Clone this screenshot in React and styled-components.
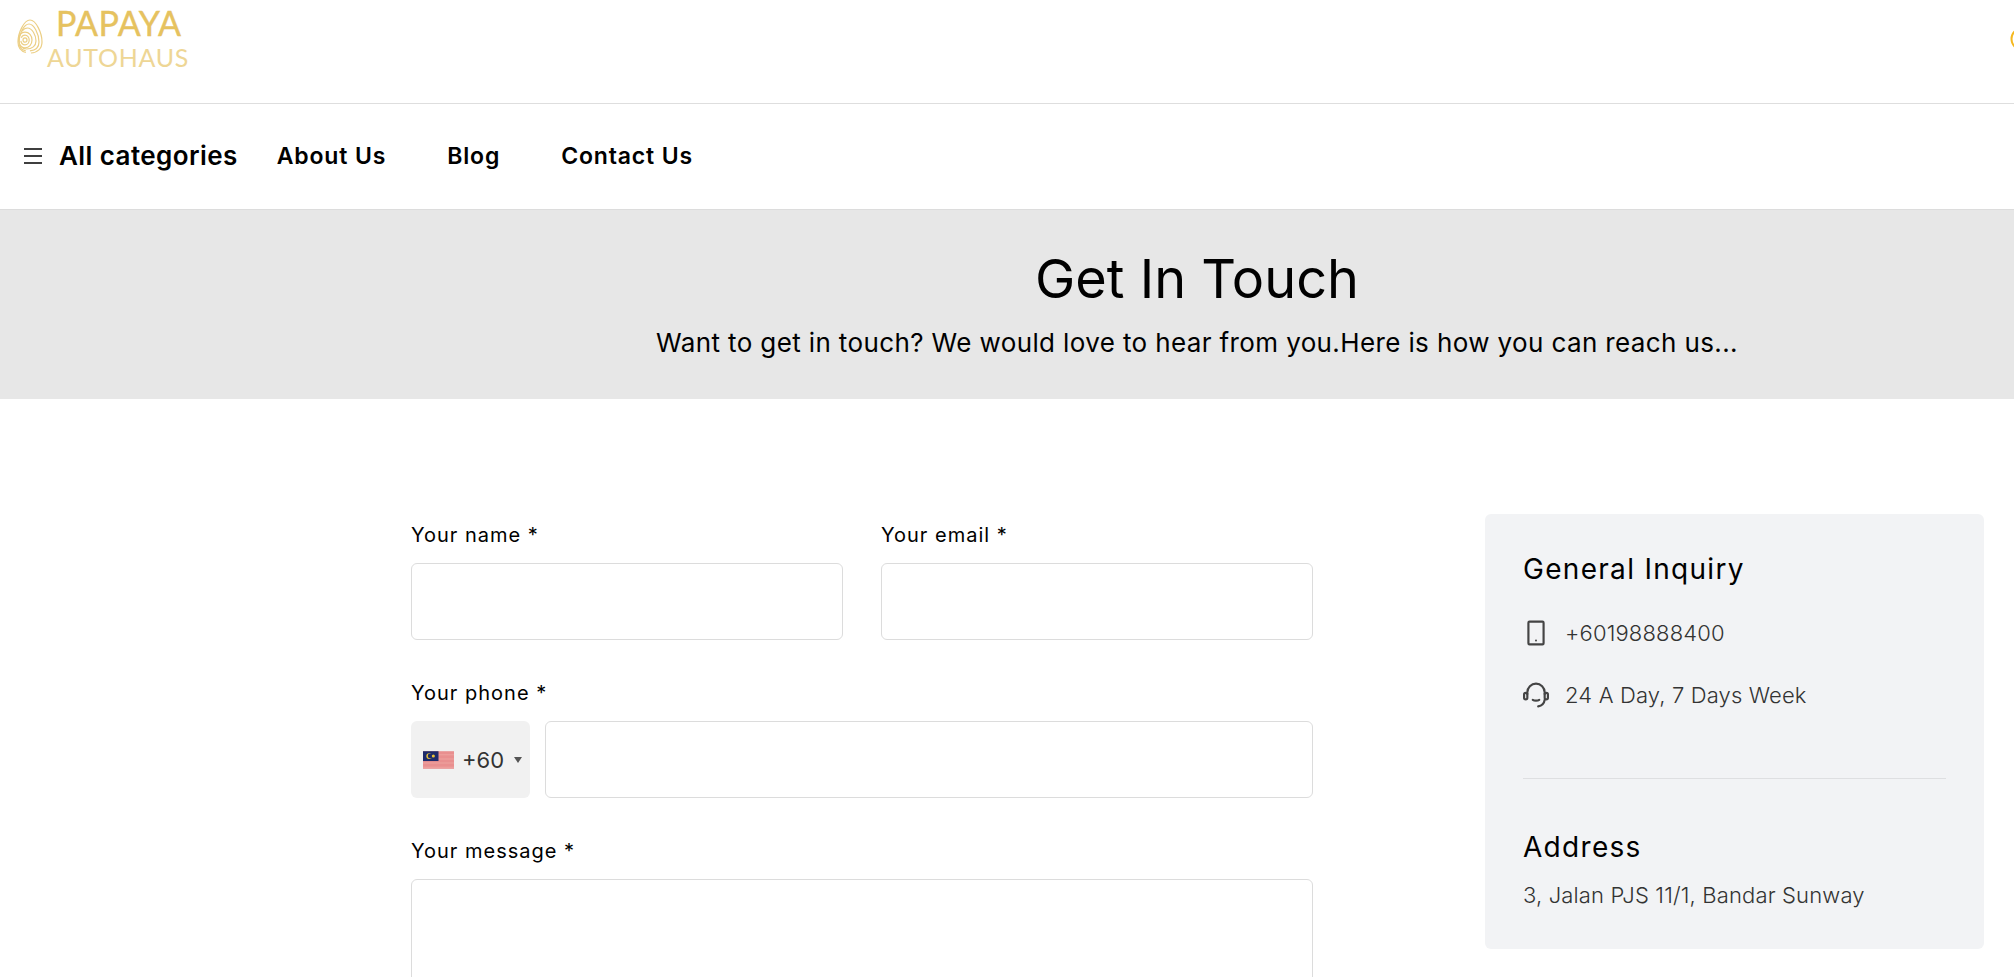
import React from "react";
import styled, { createGlobalStyle } from "styled-components";

const GlobalStyle = createGlobalStyle`
  html, body {
    margin: 0;
    padding: 0;
    background: #fff;
    overflow: hidden;
  }
  #root {
    height: 977px;
    overflow: hidden;
  }
  * {
    box-sizing: border-box;
  }
`;

export default function App() {
  return (
    <Page>
      <GlobalStyle />
      <TopBar>
        <Logo>
          <FingerPrint />
          <LogoText>
            <LogoTitle>PAPAYA</LogoTitle>
            <LogoSub>AUTOHAUS</LogoSub>
          </LogoText>
        </Logo>
        <ClippedRing />
      </TopBar>

      <NavBar>
        <Categories>
          <Burger viewBox="0 0 18 16">
            <path d="M0 1h18M0 8h18M0 15h18" stroke="#000" strokeWidth="1.7" />
          </Burger>
          All categories
        </Categories>
        <NavLink>About Us</NavLink>
        <NavLink>Blog</NavLink>
        <NavLink>Contact Us</NavLink>
      </NavBar>

      <Banner>
        <BannerTitle>Get In Touch</BannerTitle>
        <BannerText>
          Want to get in touch? We would love to hear from you.Here is how you
          can reach us...
        </BannerText>
      </Banner>

      <Main>
        <Form>
          <FieldRow>
            <Field>
              <Label>Your name *</Label>
              <Input />
            </Field>
            <Field>
              <Label>Your email *</Label>
              <Input />
            </Field>
          </FieldRow>
          <Field>
            <Label>Your phone *</Label>
            <PhoneRow>
              <CountryPicker>
                <Flag />
                <span>+60</span>
                <Caret />
              </CountryPicker>
              <Input />
            </PhoneRow>
          </Field>
          <Field>
            <Label>Your message *</Label>
            <Message />
          </Field>
        </Form>

        <Aside>
          <AsideTitle>General Inquiry</AsideTitle>
          <InfoRow>
            <TabletIcon />
            +60198888400
          </InfoRow>
          <InfoRow>
            <HeadsetIcon />
            24 A Day, 7 Days Week
          </InfoRow>
          <Divider />
          <AsideTitle>Address</AsideTitle>
          <AddressText>3, Jalan PJS 11/1, Bandar Sunway</AddressText>
        </Aside>
      </Main>
    </Page>
  );
}

// egg shaped ridges on the outside, round whorl low on the left
const ridges = [
  { d: "M14 1C20 1 26 14 26 23C26 30 21 34 14 34C7 34 2 30 2 23C2 14 8 1 14 1Z", dash: "44 5" },
  { d: "M13 5C18 5 23 15 23 23C23 29 18 32 12 32C6 32 3 28 3 23C3 15 8 5 13 5Z", dash: "36 4" },
  { d: "M11.5 9C16 9 20 16 20 22C20 27 16 30 10.5 30C6 30 3 26 3 21.5C3 15 7 9 11.5 9Z", dash: "50 3" },
  { d: "M9 13.2C13 13.2 16 16.5 16 21C16 25.5 13 28.8 9 28.8C5 28.8 2.5 25.5 2.5 21C2.5 16.5 5 13.2 9 13.2Z", dash: "30 3" },
  { d: "M9 16.2C11.5 16.2 13.2 18.3 13.2 21C13.2 23.7 11.5 25.8 9 25.8C6.5 25.8 4.8 23.7 4.8 21C4.8 18.3 6.5 16.2 9 16.2Z", dash: "20 3" },
  { d: "M9 18.8C10.2 18.8 11 19.8 11 21C11 22.2 10.2 23.2 9 23.2C7.8 23.2 7 22.2 7 21C7 19.8 7.8 18.8 9 18.8Z", dash: "14 0" },
];

function FingerPrint() {
  return (
    <LogoMark viewBox="0 0 27 35">
      {ridges.map((r, i) => (
        <path
          key={i}
          d={r.d}
          fill="none"
          stroke="#eccf85"
          strokeWidth="1.2"
          strokeDasharray={r.dash}
        />
      ))}
    </LogoMark>
  );
}

function ClippedRing() {
  return (
    <Ring viewBox="0 0 24 24">
      <circle cx="12" cy="12" r="10.5" fill="none" stroke="#f5b820" strokeWidth="2" />
    </Ring>
  );
}

function Flag() {
  return (
    <FlagSvg viewBox="0 0 30 17">
      <rect width="30" height="17" fill="#e98f8f" />
      <path d="M0 3.5h30M0 7.5h30M0 11.5h30M0 15.5h30" stroke="#eea3a0" strokeWidth="1" />
      <rect width="15" height="9.5" fill="#1c2a6b" />
      <circle cx="6" cy="4.7" r="2.8" fill="#e8c23a" />
      <circle cx="7" cy="4.7" r="2.4" fill="#1c2a6b" />
      <circle cx="10" cy="4.7" r="1.5" fill="#e8c23a" />
    </FlagSvg>
  );
}

function TabletIcon() {
  return (
    <InfoIcon viewBox="0 0 24 24">
      <rect x="5" y="1.5" width="14" height="21" rx="1" fill="none" stroke="#444" strokeWidth="2" />
      <circle cx="12" cy="19" r="0.9" fill="#444" />
    </InfoIcon>
  );
}

function HeadsetIcon() {
  return (
    <InfoIcon viewBox="0 0 24 24">
      <g fill="none" stroke="#444" strokeWidth="2" strokeLinecap="round">
        <path d="M4 11V9.5a8 8 0 0 1 16 0V11" />
        <rect x="1" y="10" width="3" height="6" rx="1.5" />
        <rect x="20" y="10" width="3" height="6" rx="1.5" />
        <path d="M9 16.5c1.5 1 4.5 1 6 0" />
        <path d="M20 16.5c-.5 3.5-3 5.5-6 6" />
      </g>
    </InfoIcon>
  );
}

const Page = styled.div`
  font-family: "Inter", "Open Sans", sans-serif;
  color: #000;
`;

const TopBar = styled.header`
  height: 104px;
  display: flex;
  justify-content: space-between;
  align-items: flex-start;
  padding-left: 16px;
  border-bottom: 1px solid #dedede;
  overflow: hidden;
`;

const Logo = styled.div`
  display: flex;
  align-items: flex-start;
  gap: 4px;
`;

const LogoMark = styled.svg`
  width: 27px;
  height: 35px;
  margin-top: 19px;
`;

const LogoText = styled.div`
  display: flex;
  flex-direction: column;
  align-items: flex-start;
  padding-top: 3px;
  font-family: "Lato", sans-serif;
`;

const LogoTitle = styled.div`
  font-size: 34px;
  line-height: 40px;
  color: #e6c25f;
  margin-left: 9px;
  letter-spacing: 0.4px;
  -webkit-text-stroke: 0.4px #e6c25f;
`;

const LogoSub = styled.div`
  font-size: 25px;
  line-height: 28px;
  letter-spacing: 0.7px;
  color: #eed695;
`;

const Ring = styled.svg`
  width: 24px;
  height: 24px;
  margin-top: 27px;
  margin-right: -20px;
  flex: none;
`;

const NavBar = styled.nav`
  height: 106px;
  display: flex;
  align-items: center;
  padding: 0 0 2px 24px;
  border-bottom: 1px solid #dcdcdc;
`;

const Burger = styled.svg`
  width: 18px;
  height: 16px;
  margin-right: 17px;
`;

const Categories = styled.div`
  display: flex;
  align-items: center;
  font-size: 26px;
  font-weight: 600;
  letter-spacing: 0.42px;
  margin-right: 39px;
`;

const NavLink = styled.a`
  font-size: 23px;
  font-weight: 600;
  letter-spacing: 0.85px;
  margin-right: 61px;
`;

const Banner = styled.section`
  height: 189px;
  background: #e7e7e7;
  padding-left: 380px;
  padding-top: 37px;
  text-align: center;
`;

const BannerTitle = styled.h1`
  margin: 0;
  font-size: 54px;
  line-height: 64px;
  font-weight: 400;
`;

const BannerText = styled.p`
  margin: 14px 0 0;
  font-size: 26px;
  line-height: 36px;
  letter-spacing: 0.38px;
`;

const Main = styled.main`
  display: grid;
  grid-template-columns: 902px 499px;
  column-gap: 172px;
  padding: 115px 0 0 411px;
  align-items: start;
`;

const Form = styled.form`
  display: flex;
  flex-direction: column;
  gap: 41px;
  padding-top: 9px;
`;

const FieldRow = styled.div`
  display: grid;
  grid-template-columns: 432px 432px;
  column-gap: 38px;
`;

const Field = styled.div`
  display: flex;
  flex-direction: column;
`;

const Label = styled.label`
  font-size: 20px;
  line-height: 24px;
  font-weight: 400;
  letter-spacing: 1px;
  margin-bottom: 16px;
`;

const Input = styled.input`
  display: block;
  width: 100%;
  min-width: 0;
  height: 77px;
  border: 1px solid #dcdcdc;
  border-radius: 6px;
  background: #fff;
  outline: none;
`;

const Message = styled.textarea`
  display: block;
  width: 100%;
  height: 240px;
  border: 1px solid #dcdcdc;
  border-radius: 6px;
  background: #fff;
  resize: none;
  outline: none;
`;

const PhoneRow = styled.div`
  display: flex;
  gap: 15px;
`;

const CountryPicker = styled.div`
  flex: none;
  width: 119px;
  height: 77px;
  display: flex;
  align-items: center;
  padding-left: 12px;
  background: #f1f1f1;
  border-radius: 6px;
  font-size: 22px;
  color: #333;
`;

const FlagSvg = styled.svg`
  width: 31px;
  height: 18px;
  margin-right: 8px;
`;

const Caret = styled.i`
  width: 0;
  height: 0;
  margin-left: 10px;
  border-left: 4px solid transparent;
  border-right: 4px solid transparent;
  border-top: 6px solid #555;
`;

const Aside = styled.aside`
  height: 435px;
  background: #f2f3f5;
  border-radius: 6px;
  padding: 38px;
`;

const AsideTitle = styled.h3`
  margin: 0 0 32px;
  font-size: 28px;
  line-height: 34px;
  font-weight: 400;
  letter-spacing: 1.3px;
`;

const InfoRow = styled.div`
  display: flex;
  align-items: center;
  gap: 16px;
  height: 30px;
  margin-bottom: 32px;
  font-size: 22px;
  font-weight: 300;
  letter-spacing: 0.15px;
  color: #333;
`;

const InfoIcon = styled.svg`
  width: 26px;
  height: 26px;
  flex: none;
`;

const Divider = styled.hr`
  border: 0;
  border-top: 1px solid #dedfe1;
  margin: 68px 0 51px;
`;

const AddressText = styled.p`
  margin: -16px 0 0;
  font-size: 22px;
  line-height: 30px;
  font-weight: 300;
  letter-spacing: 0.15px;
  color: #333;
`;
